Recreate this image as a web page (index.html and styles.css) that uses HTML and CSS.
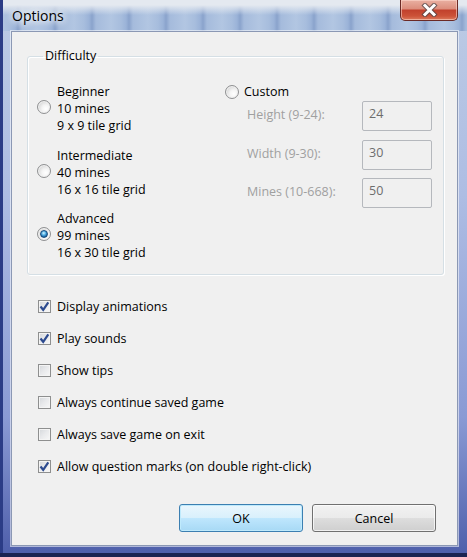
FILE: index.html
```html
<!DOCTYPE html>
<html>
<head>
<meta charset="utf-8">
<title>Options</title>
<link rel="stylesheet" href="styles.css">
</head>
<body>
<div class="window">
  <div class="titlebar">
    <span class="title">Options</span>
    <button class="close" aria-label="Close">
      <svg width="19" height="14" viewBox="0 0 19 14">
        <path d="M5 2.5 L14 11.5 M14 2.5 L5 11.5" stroke="#4b4447" stroke-width="5" stroke-linecap="square" fill="none" opacity="0.75"/>
        <path d="M5 2.5 L14 11.5 M14 2.5 L5 11.5" stroke="#ffffff" stroke-width="3" stroke-linecap="square" fill="none"/>
      </svg>
    </button>
  </div>
  <div class="client">
    <fieldset class="group">
      <legend>Difficulty</legend>
      <div class="group-body">
        <div class="levels">
          <label class="level"><span class="radio"></span><span class="level-text">Beginner<br>10 mines<br>9 x 9 tile grid</span></label>
          <label class="level"><span class="radio"></span><span class="level-text">Intermediate<br>40 mines<br>16 x 16 tile grid</span></label>
          <label class="level"><span class="radio on"></span><span class="level-text">Advanced<br>99 mines<br>16 x 30 tile grid</span></label>
        </div>
        <div class="custom">
          <label class="custom-head"><span class="radio"></span><span>Custom</span></label>
          <div class="fields">
            <span class="flabel">Height (9-24):</span><span class="input">24</span>
            <span class="flabel">Width (9-30):</span><span class="input">30</span>
            <span class="flabel">Mines (10-668):</span><span class="input">50</span>
          </div>
        </div>
      </div>
    </fieldset>
    <div class="options">
      <label class="check-row"><span class="check on"><svg width="11" height="11" viewBox="0 0 11 11"><path d="M1.5 5.5 L4.2 8.8 L9.3 1.3" stroke="#2c4a8f" stroke-width="2.2" fill="none"/></svg></span>Display animations</label>
      <label class="check-row"><span class="check on"><svg width="11" height="11" viewBox="0 0 11 11"><path d="M1.5 5.5 L4.2 8.8 L9.3 1.3" stroke="#2c4a8f" stroke-width="2.2" fill="none"/></svg></span>Play sounds</label>
      <label class="check-row"><span class="check"></span>Show tips</label>
      <label class="check-row"><span class="check"></span>Always continue saved game</label>
      <label class="check-row"><span class="check"></span>Always save game on exit</label>
      <label class="check-row"><span class="check on"><svg width="11" height="11" viewBox="0 0 11 11"><path d="M1.5 5.5 L4.2 8.8 L9.3 1.3" stroke="#2c4a8f" stroke-width="2.2" fill="none"/></svg></span>Allow question marks (on double right-click)</label>
    </div>
    <div class="buttons">
      <button class="btn default">OK</button>
      <button class="btn">Cancel</button>
    </div>
  </div>
</div>
</body>
</html>
```
FILE: styles.css
```css
html, body {
  margin: 0;
  padding: 0;
  background: #1a2350;
}
body {
  width: 467px;
  height: 557px;
  overflow: hidden;
  font-family: "Open Sans", "Noto Sans", sans-serif;
  font-size: 12.5px;
  color: #000;
}
.window {
  width: 467px;
  height: 557px;
  display: flex;
  flex-direction: column;
  box-sizing: border-box;
  background:
    linear-gradient(to top, #1b2452 0, #1b2452 4px, transparent 4px),
    linear-gradient(to right, #2b3c86 0, #2b3c86 3px, transparent 3px),
    linear-gradient(180deg, #e4e9f0 0, #e4e9f0 5px, rgba(228,233,240,0) 15px),
    repeating-linear-gradient(90deg, #b2c6e2 0, #a7bddd 10px, #9bb3d8 15px, #8aa3cc 18px, #a5bbdc 22px, #b2c6e2 37px) 0 0 / 100% 31px no-repeat,
    linear-gradient(180deg, #bccbe4 0, #aebde3 35%, #8a9ad4 75%, #4d5eaa 100%);
}
.titlebar {
  height: 31px;
  display: flex;
  justify-content: space-between;
  align-items: flex-start;
  padding: 0 9px 0 12px;
  flex: none;
}
.title {
  font-size: 14px;
  line-height: 20px;
  margin-top: 6px;
  text-shadow: 0 0 6px #fff, 0 0 8px #fff, 0 0 10px rgba(255,255,255,.9);
}
.close {
  width: 58px;
  height: 21px;
  margin: 0;
  padding: 0;
  border: 1px solid #6b2a25;
  border-top: none;
  border-radius: 0 0 5px 5px;
  background: linear-gradient(180deg, #e9b0a2 0, #dc8d7c 45%, #c1402c 50%, #cc5238 80%, #dc7a5d 100%);
  box-shadow: inset 0 0 0 1px rgba(255,220,210,.55);
  display: flex;
  align-items: center;
  justify-content: center;
}
.close svg { display: block; }
.client {
  flex: none;
  height: 515px;
  margin: 0 9px 0 11px;
  box-sizing: border-box;
  border: 1px solid #8b98b4;
  background: #f0f0f0;
  display: flex;
  flex-direction: column;
  box-shadow: 0 0 0 1px rgba(255,255,255,.55);
}
.group {
  margin: 16px 13px 0 15px;
  padding: 0 0 13px 10px;
  border: 1px solid #d5dfe5;
  border-radius: 3px;
  box-shadow: inset 1px 1px 0 #fff, 1px 1px 0 #fff;
  min-width: 0;
}
.group legend {
  padding: 0 2px;
  margin-left: 5px;
  line-height: 16px;
}
.group-body {
  display: grid;
  grid-template-columns: 188px 1fr;
  margin-top: 19px;
}
.levels {
  display: flex;
  flex-direction: column;
  gap: 12.5px;
}
.level {
  display: flex;
  align-items: center;
  gap: 6px;
}
.level .radio { margin-bottom: 3px; }
.level-text { line-height: 17px; }
.radio {
  width: 14px;
  height: 14px;
  box-sizing: border-box;
  border-radius: 50%;
  border: 1px solid #8f9092;
  background: radial-gradient(circle at 65% 65%, #ffffff 0, #f4f4f4 35%, #d6d6d6 75%, #c4c4c4 100%);
  box-shadow: inset 0 0 0 1px #f2f2f2;
  flex: none;
  position: relative;
  margin-left: -1px;
}
.radio.on::after {
  content: "";
  position: absolute;
  left: 2px;
  top: 2px;
  width: 8px;
  height: 8px;
  box-sizing: border-box;
  border-radius: 50%;
  border: 1px solid #174a7c;
  background: radial-gradient(circle at 45% 35%, #d8f4ff 0, #5db7e8 35%, #1a6aa8 70%, #0c3e6e 100%);
}
.custom-head {
  display: flex;
  align-items: center;
  gap: 5px;
  line-height: 17px;
  height: 17px;
}
.fields {
  display: grid;
  grid-template-columns: 115px 70px;
  row-gap: 8.5px;
  margin: 1px 0 0 21px;
}
.flabel {
  color: #a0a0a0;
  line-height: 17px;
  padding-top: 5px;
}
.input {
  height: 30px;
  box-sizing: border-box;
  border: 1px solid #b5b8bd;
  border-radius: 2px;
  padding: 3px 6px;
  line-height: 17px;
  color: #6d6d6d;
  background: #f0f0f0;
}
.options {
  margin: 23px 0 0 26px;
  display: flex;
  flex-direction: column;
  gap: 15px;
}
.check-row {
  display: flex;
  align-items: center;
  gap: 6px;
  line-height: 17px;
}
.check {
  width: 13px;
  height: 13px;
  box-sizing: border-box;
  border: 1px solid #8e8f8f;
  background: linear-gradient(135deg, #d4d7db 0, #e9eaec 50%, #f8f8f8 100%);
  box-shadow: inset 0 0 0 1px #f4f4f4;
  flex: none;
  display: flex;
  align-items: center;
  justify-content: center;
}
.check svg { display: block; }
.buttons {
  margin-top: auto;
  display: flex;
  justify-content: flex-end;
  gap: 9px;
  padding: 0 21px 13px 0;
}
.btn {
  width: 124px;
  height: 28px;
  margin: 0;
  padding: 0;
  font: inherit;
  color: #000;
  border: 1px solid #707070;
  border-radius: 3px;
  background: linear-gradient(180deg, #f2f2f2 0, #ebebeb 48%, #dddddd 52%, #cfcfcf 100%);
  box-shadow: inset 0 0 0 1px rgba(255,255,255,.7);
}
.btn.default {
  border-color: #3c7fb1;
  background: linear-gradient(180deg, #eaf6fd 0, #d9f0fc 48%, #bee6fd 52%, #a7d9f5 100%);
  box-shadow: inset 0 0 0 1px #bfeafc;
}
```
